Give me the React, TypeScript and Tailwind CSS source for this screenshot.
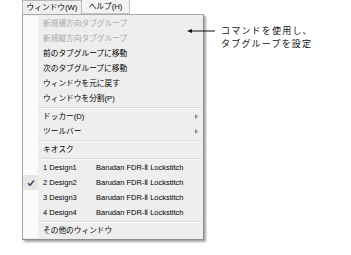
import React from "react";

type Item =
  | { kind: "item"; label: string; disabled?: boolean; sub?: boolean }
  | { kind: "sep" }
  | { kind: "design"; num: string; name: string; checked?: boolean };

const items: Item[] = [
  { kind: "item", label: "新規横方向タブグループ", disabled: true },
  { kind: "item", label: "新規縦方向タブグループ", disabled: true },
  { kind: "item", label: "前のタブグループに移動" },
  { kind: "item", label: "次のタブグループに移動" },
  { kind: "item", label: "ウィンドウを元に戻す" },
  { kind: "item", label: "ウィンドウを分割(P)" },
  { kind: "sep" },
  { kind: "item", label: "ドッカー(D)", sub: true },
  { kind: "item", label: "ツールバー", sub: true },
  { kind: "sep" },
  { kind: "item", label: "キオスク" },
  { kind: "sep" },
  { kind: "design", num: "1 Design1", name: "Barudan FDR-Ⅱ Lockstitch" },
  { kind: "design", num: "2 Design2", name: "Barudan FDR-Ⅱ Lockstitch", checked: true },
  { kind: "design", num: "3 Design3", name: "Barudan FDR-Ⅱ Lockstitch" },
  { kind: "design", num: "4 Design4", name: "Barudan FDR-Ⅱ Lockstitch" },
  { kind: "sep" },
  { kind: "item", label: "その他のウィンドウ" },
];

function Row({ item }: { item: Item }) {
  if (item.kind === "sep") {
    return (
      <div className="flex h-[3px]">
        <div className="w-[15px] bg-[#fbfbfb]" />
        <div className="flex-1 flex flex-col justify-center bg-[#eeeeee] pr-[1px]">
          <div className="h-[1px] bg-[#d9d9d9]" />
          <div className="h-[1px] bg-[#fafafa]" />
        </div>
      </div>
    );
  }
  if (item.kind === "design") {
    return (
      <div className="flex h-[15px]">
        <div
          className={
            "w-[15px] flex items-center justify-center " +
            (item.checked ? "bg-[#e6e6e6]" : "bg-[#fbfbfb]")
          }
        >
          {item.checked && (
            <svg width="8" height="8" viewBox="0 0 8 8">
              <path d="M1 4.2 L3 6.3 L7 1.5" stroke="#3b4f78" strokeWidth="1.6" fill="none" />
            </svg>
          )}
        </div>
        <div className="flex-1 flex items-center bg-[#eeeeee] pl-[5px] text-[7.5px] text-[#000]">
          <span className="w-[53px]">{item.num}</span>
          <span>{item.name}</span>
        </div>
      </div>
    );
  }
  return (
    <div className="flex h-[15px]">
      <div className="w-[15px] bg-[#fbfbfb]" />
      <div
        className={
          "flex-1 flex items-center justify-between bg-[#eeeeee] pl-[5px] pr-[5px] text-[7.7px] " +
          (item.disabled ? "text-[#a8a8a8]" : "text-[#000]")
        }
      >
        <span>{item.label}</span>
        {item.sub && (
          <svg width="3" height="5" viewBox="0 0 3 5">
            <path d="M0 0 L3 2.5 L0 5 Z" fill="#8a8a8a" />
          </svg>
        )}
      </div>
    </div>
  );
}

export default function App() {
  return (
    <div
      className="w-[351px] h-[255px] bg-white overflow-hidden"
      style={{ fontFamily: '"Liberation Sans", "DejaVu Sans", "Noto Sans CJK JP", sans-serif' }}
    >
      <div className="flex h-[14px] pl-[22px] text-[7.7px] text-[#000]">
        <div className="w-[60px] flex items-center justify-center bg-[#efefef] border-l border-r border-t border-[#b8b8b8]">
          ウィンドウ(W)
        </div>
        <div className="w-[48px] flex items-center justify-center bg-[#f3f3f3] border-r border-b border-[#c8c8c8]">
          ヘルプ(H)
        </div>
      </div>
      <div className="flex">
        <div className="ml-[22px] w-[182px] border border-[#a8a8a8] border-r-[#8e8e8e] border-b-[#8e8e8e] bg-[#eeeeee] shadow-[2px_2px_2px_rgba(0,0,0,0.35)] py-[1px]">
          {items.map((it, i) => (
            <Row key={i} item={it} />
          ))}
        </div>
        <div className="flex items-start mt-[10px] ml-[-17px]">
          <div className="flex items-center h-[13px]">
            <svg width="28" height="6" viewBox="0 0 28 6">
              <path d="M0 3 L5 1 L5 5 Z" fill="#111" />
              <path d="M4 3 L28 3" stroke="#111" strokeWidth="1" />
            </svg>
          </div>
          <div
            className="ml-[6px] text-[9px] leading-[13px] tracking-[1.2px] text-[#111]"
            style={{ fontFamily: '"Noto Sans CJK JP", sans-serif' }}
          >
            <div>コマンドを使用し、</div>
            <div>タブグループを設定</div>
          </div>
        </div>
      </div>
    </div>
  );
}
